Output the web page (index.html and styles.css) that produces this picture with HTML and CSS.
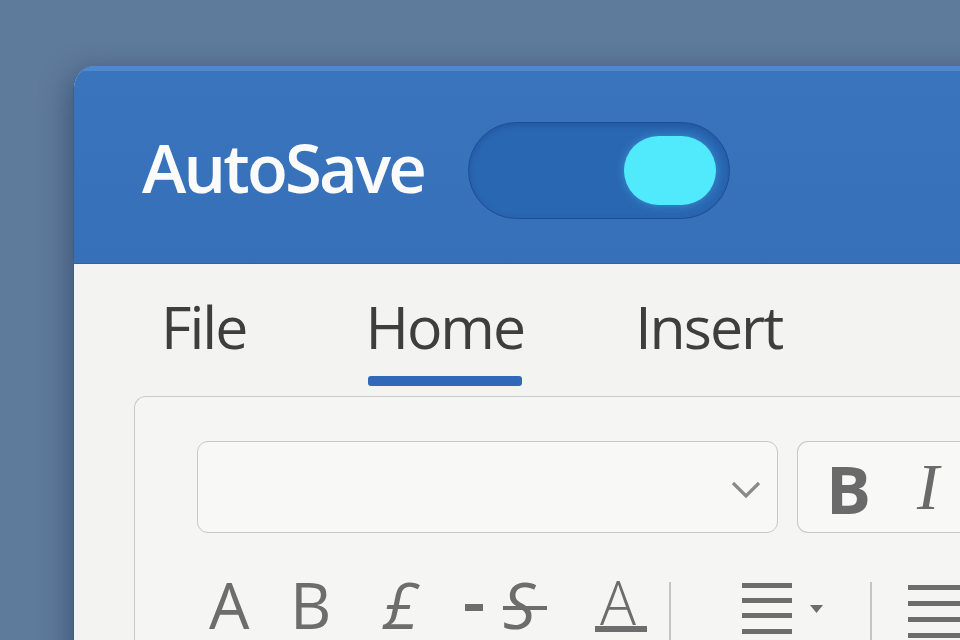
FILE: index.html
```html
<!DOCTYPE html>
<html lang="en">
<head>
<meta charset="utf-8">
<title>AutoSave</title>
<link rel="stylesheet" href="styles.css">
</head>
<body>
<div class="stage">
  <div class="window">
    <header class="titlebar">
      <span class="app-title">AutoSave</span>
      <div class="toggle" role="switch" aria-checked="true"><span class="knob"></span></div>
    </header>
    <nav class="tabs">
      <span class="tab tab-file">File</span>
      <span class="tab tab-home active">Home</span>
      <span class="tab tab-insert">Insert</span>
    </nav>
    <section class="ribbon">
      <div class="row row-top">
        <div class="font-box">
          <svg class="chev" width="30" height="18" viewBox="0 0 30 18"><path d="M2 2 L15 15 L28 2" fill="none" stroke="#8a8a8a" stroke-width="3.2"/></svg>
        </div>
        <div class="style-box">
          <span class="btn-b">B</span>
          <span class="btn-i">I</span>
        </div>
      </div>
      <div class="row row-bottom">
        <span class="g g-a">A</span>
        <span class="g g-b">B</span>
        <span class="g g-pound">£</span>
        <span class="g g-dash"></span>
        <span class="g g-s">S</span>
        <span class="g g-ua">A</span>
        <span class="sep sep1"></span>
        <svg class="align align1" width="50" height="52" viewBox="0 0 50 52"><rect x="0" y="0" width="50" height="5"/><rect x="0" y="15" width="50" height="5"/><rect x="0" y="30" width="50" height="5"/><rect x="0" y="46" width="50" height="5"/></svg>
        <svg class="caret" width="13" height="8" viewBox="0 0 13 8"><path d="M0 0 H13 L6.5 8 Z"/></svg>
        <span class="sep sep2"></span>
        <svg class="align align2" width="60" height="56" viewBox="0 0 60 56"><rect x="0" y="0" width="60" height="5"/><rect x="0" y="16" width="60" height="5"/><rect x="0" y="32" width="60" height="5"/><rect x="0" y="48" width="60" height="5"/></svg>
      </div>
    </section>
  </div>
</div>
</body>
</html>
```
FILE: styles.css
```css
* { box-sizing: border-box; }
html, body { margin: 0; padding: 0; }
body {
  width: 960px;
  height: 640px;
  overflow: hidden;
  background: #5f7b9c;
  font-family: "Open Sans", "Noto Sans", sans-serif;
}
.stage {
  padding: 66px 0 0 73px;
}
.window {
  width: 960px;
  height: 640px;
  background: #f3f3f1;
  border-radius: 22px 0 0 0;
  overflow: hidden;
  box-shadow: -4px 6px 30px rgba(25, 40, 70, 0.45);
  border-left: 1px solid #3f5f8a;
}
.titlebar {
  height: 198px;
  background: linear-gradient(180deg, #3a74bc 0%, #3670b8 100%);
  box-shadow: inset 0 5px 0 #4d88d3, inset 0 -1px 0 #2e62a8;
  display: flex;
  align-items: center;
  padding: 4px 0 0 68px;
}
.app-title {
  color: #fbfbfb;
  font-size: 67px;
  font-weight: 600;
  letter-spacing: -2.8px;
  line-height: 1;
}
.toggle {
  margin: 7px 0 0 44px;
  width: 262px;
  height: 97px;
  border-radius: 49px;
  background: #2a67b3;
  border: 1.5px solid #1e4f94;
  box-shadow: inset 0 2px 6px rgba(10, 40, 90, 0.25);
  display: flex;
  align-items: center;
  justify-content: flex-end;
  padding-right: 13px;
  flex-shrink: 0;
}
.knob {
  width: 92px;
  height: 69px;
  border-radius: 35px;
  background: #50eafc;
  box-shadow: 0 0 8px rgba(80, 230, 252, 0.35);
}
.tabs {
  height: 132px;
  display: flex;
  align-items: flex-start;
  padding: 21px 0 0 87px;
}
.tab {
  font-size: 59px;
  color: #3e3e3e;
  letter-spacing: -2px;
  line-height: 82px;
  position: relative;
}
.tab-home { margin-left: 119px; }
.tab-insert { margin-left: 111px; }
.tab.active::after {
  content: "";
  position: absolute;
  left: 3px;
  right: 2px;
  top: 91px;
  height: 10px;
  border-radius: 3px;
  background: #3168b8;
}
.ribbon {
  margin-left: 60px;
  height: 300px;
  background: #f5f5f3;
  border: 1.5px solid #c9c9c8;
  border-right: none;
  border-bottom: none;
  border-radius: 12px 0 0 0;
  padding: 44px 0 0 62px;
}
.row { display: flex; }
.row-top { gap: 19px; }
.font-box {
  flex-shrink: 0;
  width: 581px;
  height: 92px;
  border: 1.5px solid #c8c8c6;
  border-radius: 11px;
  background: #f8f8f7;
  display: flex;
  align-items: center;
  justify-content: flex-end;
  padding-right: 16px;
}
.chev { margin-top: 5px; }
.style-box {
  flex-shrink: 0;
  width: 300px;
  height: 92px;
  border: 1.5px solid #c8c8c6;
  border-right: none;
  border-radius: 11px 0 0 11px;
  background: #f8f8f7;
  display: flex;
  align-items: center;
  padding-left: 28px;
}
.btn-b {
  font-size: 67px;
  font-weight: 700;
  color: #6a6a6a;
  line-height: 1;
  margin-top: 3px;
}
.btn-i {
  margin-left: 46px;
  font-family: "Liberation Serif", "DejaVu Serif", serif;
  font-style: italic;
  font-size: 66px;
  color: #6a6a6a;
  line-height: 1;
}
.row-bottom {
  margin-top: 40px;
  padding-left: 12px;
  align-items: flex-start;
  color: #6d6d6d;
}
.g {
  font-size: 64px;
  line-height: 64px;
  display: block;
  position: relative;
}
.g-a { width: 81px; }
.g-b { width: 93px; }
.g-pound { width: 82px; font-style: italic; }
.g-dash { width: 38px; height: 64px; }
.g-dash::before {
  content: "";
  position: absolute;
  left: 0;
  top: 31px;
  width: 18px;
  height: 7px;
  background: #6d6d6d;
}
.g-s { width: 92px; font-style: italic; }
.g-s::after {
  content: "";
  position: absolute;
  left: 0;
  top: 33px;
  width: 44px;
  height: 4px;
  background: #6d6d6d;
}
.g-ua {
  width: 74px;
  font-size: 60px;
  font-weight: 300;
  padding-left: 5px;
  margin-top: -3px;
}
.g-ua::after {
  content: "";
  position: absolute;
  left: 0;
  top: 56px;
  width: 52px;
  height: 6px;
  background: #6d6d6d;
}
.sep {
  display: block;
  width: 2px;
  height: 70px;
  margin-top: 9px;
  background: #c4c4c2;
}
.align { fill: #6d6d6d; display: block; }
.align1 { margin: 10px 0 0 71px; }
.caret { fill: #6d6d6d; margin: 32px 0 0 18px; display: block; }
.sep2 { margin-left: 47px; }
.align2 { margin: 12px 0 0 36px; }
```
